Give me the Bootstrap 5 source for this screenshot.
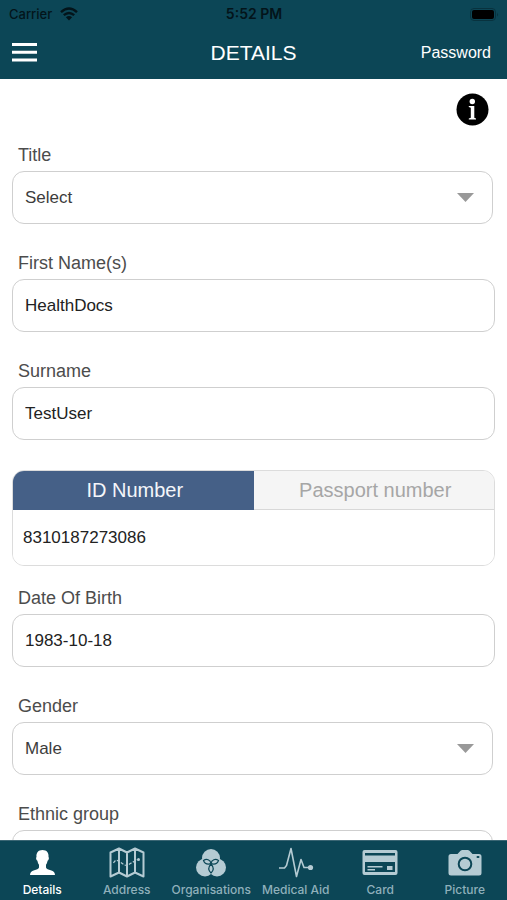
<!DOCTYPE html>
<html lang="en">
<head>
<meta charset="utf-8">
<meta name="viewport" content="width=device-width, initial-scale=1">
<title>Details</title>
<link href="https://cdn.jsdelivr.net/npm/bootstrap@5.3.0/dist/css/bootstrap.min.css" rel="stylesheet">
<style>
  body { font-family: "Liberation Sans", Arial, sans-serif; color: #444; }
  .teal-bar { background: #0c4656; }
  .status-line { font: 500 13px/28px Inter, sans-serif; color: #03141a; padding: 0 8px 0 9px; }
  .status-line .clock { font-weight: 600; font-size: 14px; }
  .title-line { height: 51px; padding: 0 12px 1px; }
  .title-line h1 { font-size: 21px; line-height: 24px; }
  .title-line a { font-size: 16px; line-height: 24px; }
  .side { flex: 1 1 0; }
  .scroller { scrollbar-width: none; padding: 14px 12px 0; min-height: 0; }
  .scroller::-webkit-scrollbar { display: none; }
  .info-line { padding-right: 6px; margin-bottom: 17px; }
  .field { margin-bottom: 27px; }
  .field label { display: block; font-size: 18px; line-height: 24px; margin: 0 6px 4px; color: #4c4c4c; }
  .field .form-control, .field .form-select { height: 53px; border: 1px solid #cfcfcf; border-radius: 12px; padding: 0 12px; font-size: 17px; color: #222; }
  .field .form-select { width: calc(100% - 2px); color: #3c3c3c; background-image: url("data:image/svg+xml,%3Csvg xmlns='http://www.w3.org/2000/svg' viewBox='0 0 17 9'%3E%3Cpath d='M0 0h17L8.500 9z' fill='%23999'/%3E%3C/svg%3E"); background-size: 17px 9px; background-position: right 18px center; }
  .id-group { border: 1px solid #dcdcdc; border-radius: 12px; margin: 30px 0 20px; }
  .id-group button { height: 39px; font-size: 20px; line-height: 24px; padding: 0 0 0 3px; border: 0; border-bottom: 1px solid #d8d8d8; background: #f5f5f5; color: #a6a6a6; }
  .id-group button.active { background: #456087; color: #f4f6fa; border-color: #456087; }
  .id-group input { height: 55px; font-size: 17px; padding: 0 10px; color: #222; }
  .tab-bar { height: 60px; border-top: 1px solid #3b6674; }
  .tab-bar a { font: 500 12px/16px Inter, sans-serif; color: #8fb0bb; padding-top: 5px; }
  .tab-bar a.active { color: #fff; }
  .tab-bar svg { color: #b5cbd3; margin-bottom: 4px; }
  .tab-bar a.active svg { color: #fff; }
</style>
<script src="https://cdn.jsdelivr.net/npm/bootstrap@5.3.0/dist/js/bootstrap.bundle.min.js"></script>
</head>
<body class="vh-100 d-flex flex-column overflow-hidden bg-white">
<header class="teal-bar flex-shrink-0">
  <div class="status-line d-flex align-items-center">
    <div class="side d-flex align-items-center gap-2">
      <span>Carrier</span>
      <svg width="18" height="14" viewBox="0 0 18 14" fill="none" stroke="currentColor" stroke-width="2.400" aria-hidden="true"><path d="M1 5.200Q9-2 17 5.200M3.800 8.200Q9 3.600 14.200 8.200"/><path d="M5.900 10.200Q9 7.600 12.100 10.200L9 13.600z" fill="currentColor" stroke="none"/></svg>
    </div>
    <span class="clock">5:52 PM</span>
    <div class="side d-flex justify-content-end">
      <svg width="29" height="13" viewBox="0 0 29 13" aria-hidden="true"><rect x=".5" y=".5" width="25" height="12" rx="3.500" fill="none" stroke="#08323e"/><rect x="2" y="2" width="22" height="9" rx="2" fill="#000"/><path d="M27 4.500q1.800 2 0 4z" fill="#08323e"/></svg>
    </div>
  </div>
  <div class="title-line d-flex align-items-center text-white">
    <div class="side">
      <button type="button" class="btn p-0 border-0 d-flex text-white" aria-label="Menu">
        <svg width="25" height="20" viewBox="0 0 25 20" fill="currentColor"><path d="M0 0h25v3H0zM0 7.700h25v3H0zM0 15.400h25v3H0z"/></svg>
      </button>
    </div>
    <h1 class="m-0 fw-normal">DETAILS</h1>
    <div class="side text-end"><a href="#" class="pe-1 text-white text-decoration-none">Password</a></div>
  </div>
</header>

<main class="scroller flex-grow-1 overflow-auto">
  <div class="info-line d-flex justify-content-end">
    <button type="button" class="btn p-0 border-0 d-flex" aria-label="Information">
      <svg width="33" height="33" viewBox="0 0 33 33"><circle cx="16.500" cy="16.500" r="16" fill="#000"/><circle cx="16.300" cy="8.500" r="2.700" fill="#fff"/><path d="M12.800 13h5.500v11.800l1.700.6v1h-7.200v-1l2-.6V14.800l-2-.7z" fill="#fff"/></svg>
    </button>
  </div>
  <form>
    <div class="field"><label for="title">Title</label><select id="title" class="form-select"><option>Select</option><option>Mr</option><option>Ms</option></select></div>
    <div class="field"><label for="first">First Name(s)</label><input id="first" class="form-control" type="text" value="HealthDocs"></div>
    <div class="field"><label for="surname">Surname</label><input id="surname" class="form-control" type="text" value="TestUser"></div>
    <div class="id-group overflow-hidden">
      <div class="d-flex">
        <button type="button" class="active w-50">ID Number</button>
        <button type="button" class="w-50">Passport number</button>
      </div>
      <input class="d-block w-100 border-0" type="text" aria-label="ID Number" value="8310187273086">
    </div>
    <div class="field"><label for="dob">Date Of Birth</label><input id="dob" class="form-control" type="text" value="1983-10-18"></div>
    <div class="field"><label for="gender">Gender</label><select id="gender" class="form-select"><option>Male</option><option>Female</option></select></div>
    <div class="field"><label for="ethnic">Ethnic group</label><select id="ethnic" class="form-select"><option>Select</option></select></div>
  </form>
</main>

<nav class="tab-bar teal-bar d-flex flex-shrink-0" aria-label="Sections">
  <a href="#" class="active side d-flex flex-column align-items-center text-decoration-none text-nowrap" aria-current="page">
    <svg width="36" height="32" viewBox="0 0 36 32" fill="currentColor"><path d="M18.500 4c4.300 0 6.500 2.800 6 7 .8.700.4 3-.9 3.800-.4 2-.9 3-1.600 4V21.500c.4 1.500 2.500 2 4.700 2.700 3 1 4.300 2.300 4.300 4.800H6c0-2.500 1.300-3.800 4.300-4.800 2.200-.7 4.300-1.200 4.700-2.700V18.800c-.7-1-1.200-2-1.600-4-1.300-.8-1.700-3.100-.9-3.800-.5-4.200 1.700-7 6-7z"/></svg>
    <span>Details</span></a>
  <a href="#" class="side d-flex flex-column align-items-center text-decoration-none text-nowrap">
    <svg width="36" height="32" viewBox="0 0 36 32" fill="none" stroke="currentColor" stroke-width="2" stroke-linejoin="round"><path d="M1.500 6.500L10 2.500l8 4 8-4 8.500 4v24L26 26.500l-8 4-8-4-8.500 4zM10 2.500v24M18 6.500v24M26 2.500v24"/><path d="M4.500 17q2-4 5-2l6 4q3 1 5-1l8-4.500" stroke-width="1.200" stroke-dasharray="3 1.500"/><circle cx="29.500" cy="13.500" r="1.500" fill="currentColor" stroke="none"/></svg>
    <span>Address</span></a>
  <a href="#" class="side d-flex flex-column align-items-center text-decoration-none text-nowrap">
    <svg width="36" height="32" viewBox="0 0 36 32"><g fill="currentColor"><circle cx="18" cy="12" r="9"/><circle cx="12" cy="21.500" r="9"/><circle cx="24" cy="21.500" r="9"/></g><g fill="none" stroke="#0c4656" stroke-width="1.200"><path d="M10.500 14.500c3-2 7-1 7.500 3.200-3.500 1-6.500-.4-7.500-3.200zM25.500 14.500c-3-2-7-1-7.500 3.200 3.500 1 6.500-.4 7.500-3.200zM18 18c2.700 3 2.700 6.500 0 9-2.700-2.500-2.700-6 0-9z"/></g></svg>
    <span>Organisations</span></a>
  <a href="#" class="side d-flex flex-column align-items-center text-decoration-none text-nowrap">
    <svg width="36" height="32" viewBox="0 0 36 32" fill="none" stroke="currentColor" stroke-width="1.600" stroke-linejoin="round"><path d="M1 22h5.500L8.500 19.500 13 2.500l5.500 28 4.500-17 3 8h6"/><circle cx="32.500" cy="21.500" r="2.600" fill="currentColor" stroke="none"/></svg>
    <span>Medical Aid</span></a>
  <a href="#" class="side d-flex flex-column align-items-center text-decoration-none text-nowrap">
    <svg width="36" height="32" viewBox="0 0 36 32"><rect x=".5" y="4" width="35" height="25" rx="2" fill="currentColor"/><path d="M3 7h30v2.500H3zM3 16h30v10H3z" fill="#0c4656"/><path d="M5.500 20h15v1.500h-15zM5.500 23h7.500v1.500H5.500zM25 20h5.500v4H25z" fill="currentColor"/></svg>
    <span>Card</span></a>
  <a href="#" class="side d-flex flex-column align-items-center text-decoration-none text-nowrap">
    <svg width="36" height="32" viewBox="0 0 36 32"><path d="M4 8h6.500l3-3.200q.7-.8 2-.8h5q1.300 0 2 .8l3 3.200H32q2.500 0 2.500 2.500v16.500q0 2.500-2.500 2.500H4q-2.500 0-2.500-2.500V10.500Q1.500 8 4 8z" fill="currentColor"/><circle cx="18" cy="18" r="6.300" fill="none" stroke="#0c4656" stroke-width="2"/><rect x="29.500" y="10" width="3" height="2" rx="1" fill="#0c4656"/></svg>
    <span>Picture</span></a>
</nav>
</body>
</html>
